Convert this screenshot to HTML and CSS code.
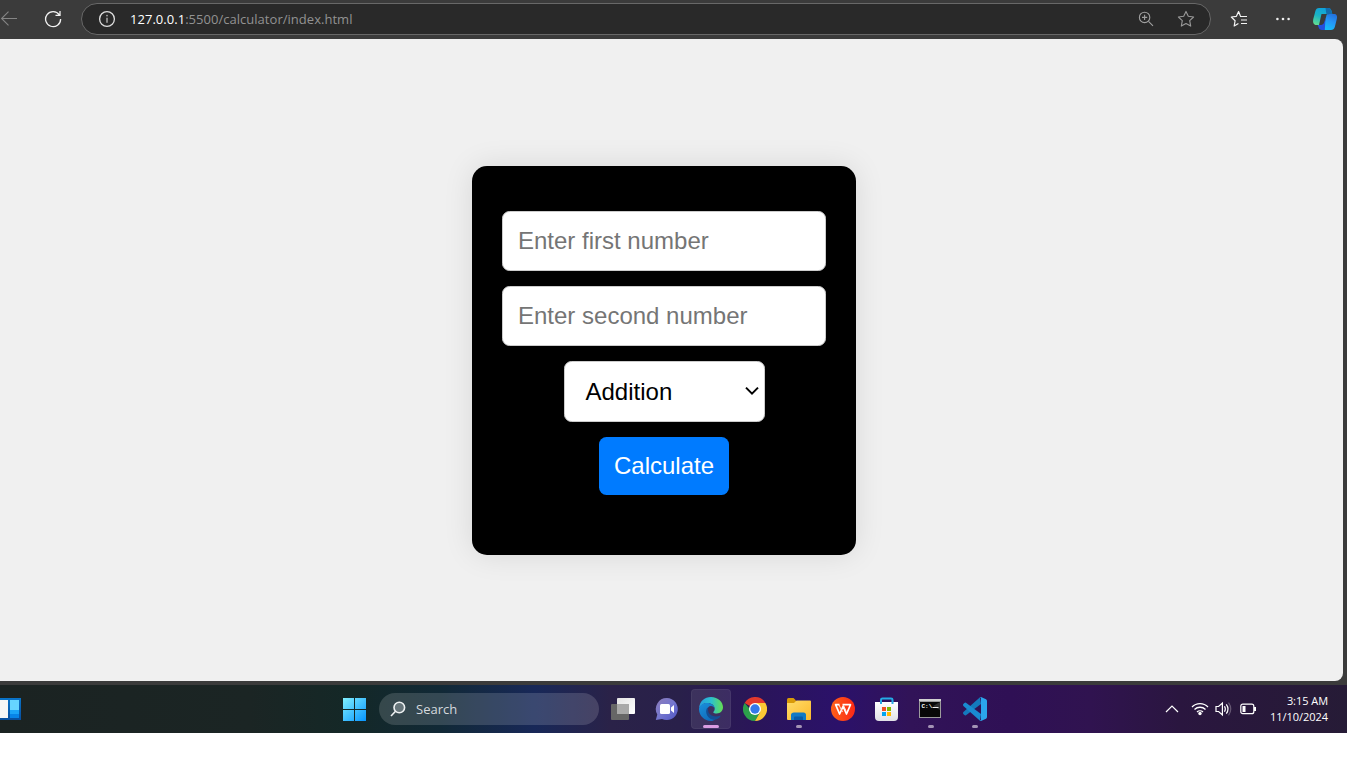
FILE: index.html
```html
<!DOCTYPE html>
<html lang="en">
<head>
<meta charset="utf-8">
<title>Calculator</title>
<link rel="stylesheet" href="styles.css">
</head>
<body>
<div class="screen">
  <header class="toolbar">
    <svg class="back" width="17" height="16" viewBox="0 0 17 16" fill="none" stroke="#858585" stroke-width="1.1"><path d="M17 7.500H1.500M8.500.700L1.600 7.500l6.900 6.800"/></svg>
    <svg class="reload" width="18" height="18" viewBox="0 0 18 18" fill="none" stroke="#f2f2f2" stroke-width="1.3"><path d="M16.600 9A7.500 7.500 0 1 1 15.300 4.900M16 1v4.400h-4.500"/></svg>
    <div class="address">
      <svg width="18" height="18" viewBox="0 0 18 18" fill="none" stroke="#dedede" stroke-width="1.3"><circle cx="9" cy="9" r="7.4"/><path d="M9 7.800v5" stroke="#aaa" stroke-width="1.500"/><circle cx="9" cy="5.600" r=".9" fill="#aaa" stroke="none"/></svg>
      <span class="url"><b>127.0.0.1</b>:5500/calculator/index.html</span>
      <svg class="zoom" width="16" height="16" viewBox="0 0 16 16" fill="none" stroke="#a0a0a0" stroke-width="1.1"><circle cx="6.600" cy="6.400" r="5.200"/><path d="M6.600 3.800V9M4 6.400h5.200M10.500 10.300l4.500 4.500"/></svg>
      <svg width="18" height="18" viewBox="0 0 18 18" fill="none" stroke="#999" stroke-width="1.1" stroke-linejoin="round"><path d="M9 1.400l2.300 4.900 5.300.7-3.900 3.700 1 5.400L9 13.500l-4.700 2.600 1-5.400L1.400 7l5.300-.7z"/></svg>
    </div>
    <svg class="favs" width="18" height="18" viewBox="0 0 18 18" fill="none" stroke="#f4f4f4" stroke-width="1.2" stroke-linejoin="round"><path d="M10.400 5.900L8.600 1.500 6.400 6.300 1.300 7l3.800 3.700-.9 5.300 4.200-2.400M10 6.500h7M11 10h6M11 13.500h6"/></svg>
    <svg class="dots" width="16" height="6" viewBox="0 0 16 6" fill="#eee"><circle cx="2.400" cy="3" r="1.3"/><circle cx="8" cy="3" r="1.3"/><circle cx="13.600" cy="3" r="1.3"/></svg>
    <svg class="copilot" width="26" height="24" viewBox="0 0 26 24">
      <defs>
        <linearGradient id="cpA" x1=".6" y1="0" x2=".2" y2="1"><stop offset="0" stop-color="#0ea0dd"/><stop offset=".5" stop-color="#1bb4c4"/><stop offset="1" stop-color="#61dc91"/></linearGradient>
        <linearGradient id="cpB" x1=".8" y1="0" x2=".4" y2="1"><stop offset="0" stop-color="#236edb"/><stop offset=".5" stop-color="#2596f7"/><stop offset="1" stop-color="#16bdf9"/></linearGradient>
      </defs>
      <path d="M7 1h9c2 0 3 1 3.500 3l.8 3h-2.500c-2 0-3 .7-3.500 2.400L12.300 14c-.7 2.200-1.700 4-4 4H4.500C1.500 18 .6 15.500 1.300 12L3.400 4C4 2 5 1 7 1z" fill="url(#cpA)"/>
      <path d="M13.500 1H16c2 0 3 1 3.500 3l.8 3h-2.500c-1.500 0-2.600.4-3.200 1.600z" fill="#126cad"/>
      <path d="M9.500 7h5.400l-2.600 9.500q-.6 1.500-2 1.500H7z" fill="#3b3b3b"/>
      <path d="M19 23h-8l3.200-13.500C14.700 7.700 16 7 17.800 7h4c3 0 3.800 2.100 3 5l-2 8c-.6 2-1.800 3-3.800 3z" fill="url(#cpB)"/>
      <path d="M5.700 18H9c1.400 0 2.600-1 3.200-2.500L13.500 11 12.800 23H10c-2 0-3-1-3.500-3z" fill="#2350dd"/>
    </svg>
  </header>

  <main class="page">
    <form class="calculator">
      <input class="field" type="text" placeholder="Enter first number">
      <input class="field" type="text" placeholder="Enter second number">
      <div class="select"><span>Addition</span><svg class="caret" width="16" height="10" viewBox="0 0 16 10" fill="none" stroke="#000" stroke-width="2"><path d="M2 1.600l6 6 6-6"/></svg></div>
      <button class="calculate" type="button">Calculate</button>
    </form>
  </main>

  <footer class="taskbar">
    <svg class="widgets" width="21" height="22" viewBox="0 0 21 22">
      <defs><linearGradient id="wd" x2="0" y2="1"><stop stop-color="#0974c9"/><stop offset="1" stop-color="#084e9d"/></linearGradient></defs>
      <path fill="url(#wd)" d="M0 0h21v22H0z"/><path fill="#f6f6f6" d="M0 2h8v18H0z"/><path fill="#66d5ff" d="M10 2h9v10h-9z"/><path fill="#1aa4f8" d="M10 12h9v4h-9z"/><path fill="#0784e8" d="M10 16h9v4h-9z"/>
    </svg>
    <div class="apps">
      <div class="app">
        <svg width="24" height="24" viewBox="0 0 24 24"><defs><linearGradient id="win" gradientUnits="userSpaceOnUse" x1="0" y1="0" x2="23" y2="24"><stop stop-color="#83f2ff"/><stop offset="1" stop-color="#0795ff"/></linearGradient></defs><path fill="url(#win)" d="M0 1h11v11H0zM12 1h11v11H12zM0 13h11v11H0zM12 13h11v11H12z"/></svg>
      </div>
      <div class="search"><svg width="16" height="16" viewBox="0 0 16 16" fill="#66757a" stroke="#eef1f2" stroke-width="1.600"><circle cx="9.300" cy="6.500" r="5.300"/><path d="M5.300 10.500L1 15"/></svg><span>Search</span></div>
      <div class="app">
        <svg width="24" height="24" viewBox="0 0 24 24"><defs><linearGradient id="tv" x2="1" y2="1"><stop stop-color="#e4e4e4"/><stop offset="1" stop-color="#fff"/></linearGradient></defs><rect x="0" y="7" width="18" height="16" rx="1" fill="#666"/><rect x="6" y="1" width="18" height="16" rx="1" fill="url(#tv)"/><path fill="#a9a9a9" d="M6 7h12v10H6z"/></svg>
      </div>
      <div class="app">
        <svg width="24" height="24" viewBox="0 0 24 24"><defs><linearGradient id="ch" x1="0" x2="1" y2="1"><stop stop-color="#8d7cb8"/><stop offset="0.500" stop-color="#7476ce"/><stop offset="1" stop-color="#5055c5"/></linearGradient></defs><path d="M12 1a11 11 0 1 1-5 20.900L.8 23l1.500-5.500A11 11 0 0 1 12 1z" fill="url(#ch)"/><rect x="5" y="7" width="10" height="10" rx="1.500" fill="#fff"/><path d="M16 10.500L19 8v8l-3-2.500z" fill="#fff"/></svg>
      </div>
      <div class="app active">
        <svg width="24" height="24" viewBox="0 0 24 24"><defs><linearGradient id="edA" x1="0" x2="1"><stop stop-color="#289ddd"/><stop offset=".5" stop-color="#2bc0d0"/><stop offset="1" stop-color="#65de51"/></linearGradient><linearGradient id="edB" x2=".6" y2="1"><stop stop-color="#1a91dc"/><stop offset="1" stop-color="#116bbb"/></linearGradient></defs>
        <path fill="url(#edA)" d="M.1 11C.6 4.400 5.600 0 12 0c7.200 0 12 5.200 12 10.300 0 3.600-2.800 6.200-6.200 6.200-2.300 0-4.100-.8-3.500-1.600 1-.9 1.400-2 1.400-3.100C15.600 8.400 12.500 6 8.400 6 5 6 2 7.900.1 11z"/>
        <path fill="url(#edB)" d="M0 11.500C1 8.200 3.800 6 8 6c4.300 0 7.700 2.700 7.700 5.800-.5-1.700-2-2.800-3.700-2.800-2.300 0-4 2.100-4 4.800 0 4.900 4 8.700 8.200 8.400C15 23.400 13.600 24 12 24 5 24-.3 18.300 0 11.500z"/>
        <path fill="#144d94" d="M8.800 10.400C5.800 12 6.500 21.500 14.500 22.700c3 .2 5.600-1.400 7-3.500.2-.5-.3-.8-.8-.5-5 2.300-11.200-.5-11.500-4.900-.1-1.300-.2-2.400-.4-3.400z"/></svg>
        <i class="mark"></i>
      </div>
      <div class="app">
        <svg width="24" height="24" viewBox="0 0 24 24"><path fill="#e3392d" d="M12 12L1.600 6A12 12 0 0 1 22.400 6z"/><path fill="#2c9e4b" d="M12 12l-6-1L1.600 6A12 12 0 0 0 12 24l5.200-9z"/><path fill="#fcc934" d="M12 6h10.400A12 12 0 0 1 12 24l5.200-9z"/><circle cx="12" cy="12" r="6" fill="#fff"/><circle cx="12" cy="12" r="4.700" fill="#3579e9"/></svg>
      </div>
      <div class="app">
        <svg width="24" height="24" viewBox="0 0 24 24"><defs><linearGradient id="fo" x2="1" y2="1"><stop stop-color="#ffdc69"/><stop offset="1" stop-color="#fcb92c"/></linearGradient></defs><path fill="#d99a08" d="M0 2.500Q0 1 1.500 1h5L9 3.500v4H0z"/><path fill="url(#fo)" d="M0 6h7l2.500-2.500H23q1 0 1 1V22q0 1-1 1H1q-1 0-1-1z"/><path fill="#117ac5" d="M4 23v-5q0-2.500 3-2.500h9.500q2.500 0 2.500 2.500v5z"/><path fill="#075ba9" d="M8 19.500h7q1 0 1 1V23H7v-2.500q0-1 1-1z"/></svg>
        <i class="mark"></i>
      </div>
      <div class="app">
        <svg width="24" height="24" viewBox="0 0 24 24"><defs><linearGradient id="wp" x2="1"><stop stop-color="#ff6018"/><stop offset="1" stop-color="#fb2816"/></linearGradient></defs><circle cx="12" cy="12" r="12" fill="url(#wp)"/><path d="M8.500 7.700H4.600l4 9.300 3.500-7.700L15.500 17l4-9.300h-8" fill="none" stroke="#fff" stroke-width="1.700" stroke-linejoin="round"/><path d="M8 8l3.500 7M12.300 8l3 6.500" fill="none" stroke="#ffe6df" stroke-width="1"/></svg>
      </div>
      <div class="app">
        <svg width="24" height="24" viewBox="0 0 24 24"><defs><linearGradient id="st" x2="0" y2="1"><stop stop-color="#fff"/><stop offset="1" stop-color="#e1e1e6"/></linearGradient></defs><path d="M6 7V2.800Q6 1.500 7.500 1.500h8.500q1.500 0 1.500 1.300V7" fill="none" stroke="#24ace5" stroke-width="2"/><path d="M0 5h23v15q0 4-4 4H4q-4 0-4-4z" fill="url(#st)"/><path d="M6 5v2M17.500 5v2" stroke="#2caae5" stroke-width="2"/><path fill="#f25022" d="M7 10h4v4H7z"/><path fill="#7fba00" d="M12 10h4v4h-4z"/><path fill="#00a4ef" d="M7 15h4v4H7z"/><path fill="#ffb900" d="M12 15h4v4h-4z"/></svg>
      </div>
      <div class="app">
        <svg width="24" height="24" viewBox="0 0 24 24"><path fill="#9c9c9c" d="M0 2h22v19H0z"/><path fill="#d1d1d1" d="M0 2h22v2H0z"/><path fill="#080808" d="M1 5h20v15H1z"/><path fill="#303030" d="M14 9L21 5v8z"/><text x="2.500" y="10.500" font-family="Liberation Mono" font-size="6" font-weight="bold" fill="#fff">C:\</text><path stroke="#eee" d="M13.500 10.500h6"/></svg>
        <i class="mark"></i>
      </div>
      <div class="app">
        <svg width="24" height="24" viewBox="0 0 24 24"><path fill="#1479bd" d="M.4 15L17 .3 18 7 3 18.300q-.9.500-1.600-.2l-1.100-1.200q-.6-1 .1-1.900z"/><path fill="#198bd1" d="M.4 9L17 23.700l1-6.700L3 5.700q-.9-.5-1.600.2L.3 7.100q-.6 1 .1 1.900z"/><path fill="#2ba5ec" d="M18 0l5 2.300q1 .5 1 1.700v16q0 1.200-1 1.700L18 24q-.8 0-1.300-.6.900.4 1.300-.6V1.200q-.4-1-1.300-.6Q17.200 0 18 0z"/></svg>
        <i class="mark"></i>
      </div>
    </div>
    <div class="tray">
      <svg width="14" height="10" viewBox="0 0 14 10" fill="none" stroke="#fff" stroke-width="1.200"><path d="M1 8l6-6 6 6"/></svg>
      <svg class="wifi" width="18" height="16" viewBox="0 0 18 16" fill="none" stroke="#fff" stroke-width="1.300"><path d="M1 6a11.300 11.300 0 0 1 16 0M3.500 8.500a7.800 7.800 0 0 1 11 0M6 11a4.300 4.300 0 0 1 6 0"/><circle cx="9" cy="12.500" r="1.700" fill="#fff" stroke="none"/></svg>
      <svg class="sound" width="17" height="16" viewBox="0 0 17 16" fill="none" stroke="#fff" stroke-width="1.200"><path d="M1 5.500h2.600L7.400 2v12l-3.800-3.500H1zM9.500 5.300q1.700 2.700 0 5.400M11.300 3.300q3.400 4.700 0 9.400"/><path d="M13.500 1.700q4.500 6.300 0 12.600" stroke="#665873"/></svg>
      <svg class="battery" width="17" height="12" viewBox="0 0 17 12" fill="none" stroke="#fff" stroke-width="1.200"><rect x=".8" y="1.200" width="13" height="9.500" rx="2"/><path d="M2.500 3h3v6h-3zM14 4h2v4h-2z" fill="#fff" stroke="none"/></svg>
      <div class="clock"><span>3:15 AM</span><span>11/10/2024</span></div>
    </div>
  </footer>
</div>
</body>
</html>
```
FILE: styles.css
```css
* { box-sizing: border-box; }
body { margin: 0; background: #fff; overflow: hidden; font-family: "Noto Sans", "Open Sans", sans-serif; }
svg { display: block; flex: none; }
.screen { width: 1347px; height: 733px; background: #3b3b3b; overflow: hidden; }

.toolbar { display: flex; align-items: center; height: 39px; padding-bottom: 1px; }
.reload { margin-left: 27px; }
.address { display: flex; align-items: center; width: 1130px; height: 32px; margin-left: 19px; padding: 0 15px 0 16px; border: 1px solid #686868; border-radius: 16px; background: #292929; }
.url { margin-left: 14px; color: #929292; font: 13px/18px "Open Sans", sans-serif; letter-spacing: .03px; white-space: nowrap; }
.url b { color: #fff; font-weight: 500; }
.zoom { margin-left: auto; margin-right: 23px; }
.favs { margin-left: 19px; }
.dots { margin-left: 27px; }
.copilot { margin-left: 21px; }

.page { display: flex; align-items: center; justify-content: center; width: 1343px; height: 642px; padding: 1px 15px 0 0; background: #f0f0f0; border-radius: 0 8px 8px 0; }
.calculator { display: flex; flex-direction: column; align-items: center; gap: 15px; width: 384px; height: 389px; padding: 45px 30px; background: #000; border-radius: 15px; box-shadow: 0 0 30px rgba(0, 0, 0, .1); font-family: "Liberation Sans", Arial, sans-serif; }
.field { width: 324px; height: 60px; padding: 15px; border: 1px solid #ccc; border-radius: 7.500px; background: #fff; font: 24px "Liberation Sans", Arial, sans-serif; }
.field::placeholder { color: #757575; }
.select { display: flex; align-items: center; justify-content: space-between; width: 201px; height: 61px; padding: 0 4px 0 21px; border: 1px solid #ccc; border-radius: 7.500px; background: #fff; color: #000; font-size: 24px; }
.caret { margin-bottom: 1px; }
.calculate { width: 130px; height: 58px; padding: 0; border: 0; border-radius: 7.500px; background: #007bff; color: #fff; font: 24px "Liberation Sans", Arial, sans-serif; }

.taskbar { display: flex; align-items: center; height: 48px; margin-top: 4px; color: #fff; background: linear-gradient(90deg, #1b2322 0, #1b2524 250px, #142827 350px, #112936 440px, #182858 535px, #2a2248 610px, #29204a 680px, #2a1559 755px, #2b116a 840px, #311358 910px, #2f1055 1010px, #301350 1090px, #2a163f 1180px, #261b36 1347px); }
.apps { display: flex; align-items: center; gap: 4px; margin-left: 314px; }
.app { position: relative; display: flex; align-items: center; justify-content: center; width: 40px; height: 40px; border-radius: 4px; }
.active { background: rgba(255, 255, 255, .09); box-shadow: inset 0 0 0 1px rgba(255, 255, 255, .05); }
.mark { position: absolute; left: 17px; bottom: 1px; width: 6px; height: 3px; border-radius: 2px; background: #a494b5; }
.active .mark { left: 12px; width: 16px; background: #d99ce2; }
.search { display: flex; align-items: center; width: 220px; height: 32px; padding-left: 11px; border-radius: 16px; background: rgba(255, 255, 255, .15); color: #d4d9de; font: 13px "Open Sans", sans-serif; }
.search span { margin-left: 10px; }
.tray { display: flex; align-items: center; margin-left: auto; padding-right: 19px; }
.wifi { margin-left: 12px; }
.sound { margin-left: 6px; }
.battery { margin-left: 8px; }
.clock { display: flex; flex-direction: column; align-items: flex-end; width: 71px; font: 500 11px/16px "Open Sans", sans-serif; letter-spacing: -.05px; white-space: nowrap; }
```
